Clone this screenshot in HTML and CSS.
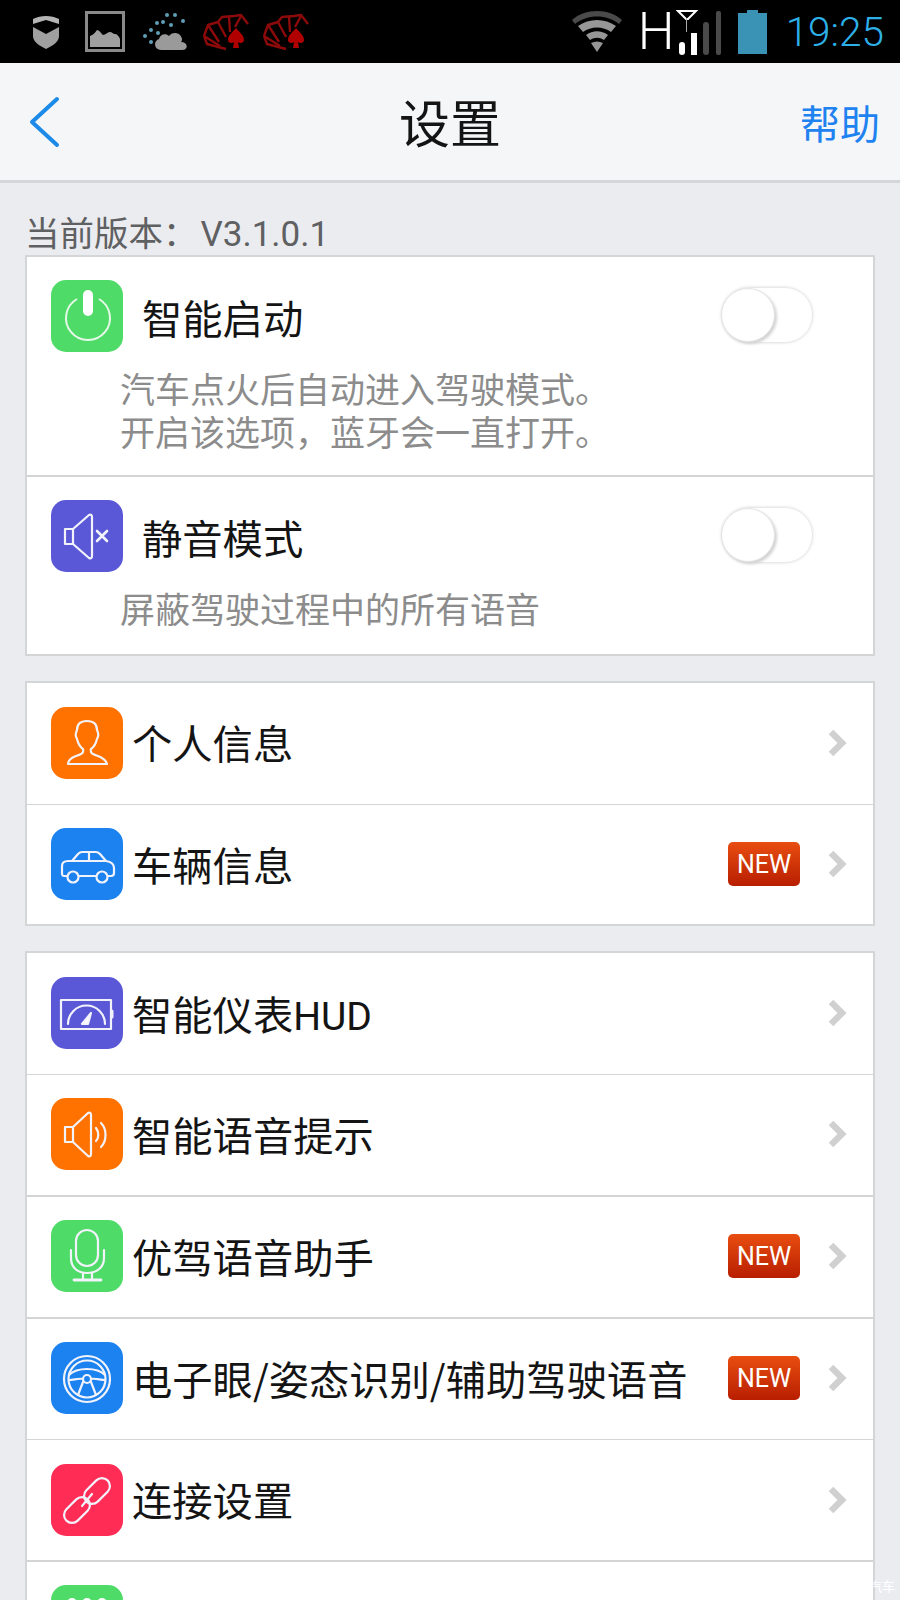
FILE: index.html
```html
<!DOCTYPE html>
<html lang="zh-CN">
<head>
  <meta charset="UTF-8" />
  <meta name="viewport" content="width=device-width, initial-scale=1" />
  <title>设置</title>
  <link rel="stylesheet" href="styles.css">
</head>
<body>
  <div class="statusbar">
    <div class="status-left">
      <svg class="st-shield" viewBox="0 0 28 34"><path d="M1 5C9 1 19 1 27 5v5L14 6 1 10z" fill="#b4b4b4" transform="translate(0 -1)"/><path d="M1 12l13 7 13-7v9c0 6-7 10-13 13C8 31 1 27 1 21z" fill="#a0a0a0"/></svg>
      <svg class="st-pic" viewBox="0 0 40 41"><rect x="1.5" y="1.5" width="37" height="38" fill="none" stroke="#8a8a8a" stroke-width="3"/><path d="M5 36V25c3-1 5-3 7-6 2 0 4 3 6 5 3 0 4-3 7-3 2 0 3 2 5 2 2 0 4 2 5 5v8z" fill="#a0a0a0"/></svg>
      <svg class="st-weather" viewBox="0 0 46 38"><path d="M18 37c-7 0-8-9-2-11 1-5 7-6 10-3 3-5 12-4 13 3 0 1 0 2-1 3 7 0 8 8 1 8z" fill="#9a9a9a"/><g fill="#5f9db5"><circle cx="2" cy="23" r="2"/><circle cx="8" cy="17" r="2"/><circle cx="8" cy="29" r="2"/><circle cx="14" cy="10" r="2"/><circle cx="15" cy="20" r="2"/><circle cx="20" cy="9" r="2"/><circle cx="28" cy="12" r="2"/><circle cx="32" cy="2" r="2"/><circle cx="24" cy="2" r="2"/><circle cx="40" cy="8" r="2"/></g></svg>
      <svg class="st-cards" viewBox="0 0 46 38"><g fill="none" stroke="#8c0a0a" stroke-width="2.4" stroke-linejoin="round"><path d="M1 23 5 12l10-3 4-5 12-1 7-1 7 9"/><path d="M1 23l3 8 19 5"/><path d="M1 23l16 10M5 12l11 17M15 9l8 15M26 4l1 15M38 3l-6 11"/></g><path d="M33 15c3 4 8 7 8 12 0 3-4 4-6 2l1 6h-6l1-6c-2 2-6 1-6-2 0-5 5-8 8-12z" fill="#b00000"/></svg>
      <svg class="st-cards" viewBox="0 0 46 38"><g fill="none" stroke="#8c0a0a" stroke-width="2.4" stroke-linejoin="round"><path d="M1 23 5 12l10-3 4-5 12-1 7-1 7 9"/><path d="M1 23l3 8 19 5"/><path d="M1 23l16 10M5 12l11 17M15 9l8 15M26 4l1 15M38 3l-6 11"/></g><path d="M33 15c3 4 8 7 8 12 0 3-4 4-6 2l1 6h-6l1-6c-2 2-6 1-6-2 0-5 5-8 8-12z" fill="#b00000"/></svg>
    </div>
    <div class="status-right">
      <svg class="st-wifi" viewBox="0 0 52 44"><path d="M1 10C14-2 38-2 51 10l-3 4C36 4 16 4 4 14z" fill="#4a4a4a"/><path d="M7 16c11-8 27-8 38 0l-5 6c-8-6-20-6-28 0z" fill="#969696"/><path d="M15 25c7-5 15-5 22 0l-4 5c-5-3-9-3-14 0z" fill="#969696"/><path d="M20 33c4-2 8-2 12 0l-6 9z" fill="#969696"/></svg>
      <span class="st-h">H</span>
      <svg class="st-signal" viewBox="0 0 46 46"><path d="M2 2h18l-8 8h-2z" fill="none" stroke="#fff" stroke-width="2"/><path d="M10 9h1v14h-1z" fill="#aaa"/><rect x="3" y="33" width="6" height="13" rx="3" fill="#fff"/><rect x="15" y="24" width="6" height="22" fill="#fff"/><rect x="27" y="13" width="6" height="33" rx="3" fill="#4a4a4a"/><rect x="40" y="2" width="5" height="44" rx="2" fill="#4a4a4a"/></svg>
      <svg class="st-batt" viewBox="0 0 29 44"><path d="M9 0h11v3h9v41H0V3h9z" fill="#3a92b5"/></svg>
      <span class="st-time">19:25</span>
    </div>
  </div>

  <div class="navbar">
    <svg class="nav-back" viewBox="0 0 32 52"><path d="M29 3 4 26l25 23" fill="none" stroke="#1b8ae8" stroke-width="4" stroke-linecap="round" stroke-linejoin="round"/></svg>
    <div class="nav-title">设置</div>
    <div class="nav-help">帮助</div>
  </div>

  <div class="version">当前版本：<span class="latin">V3.1.0.1</span></div>

  <div class="card">
    <div class="switch-row switch-row-a">
      <div class="switch-head">
        <div class="icon green">
          <svg viewBox="0 0 72 72"><path d="M26 19a22 22 0 1 0 22 0" fill="none" stroke="#e6f8e8" stroke-width="2"/><rect x="32" y="10" width="10" height="26" rx="5" fill="#fff"/></svg>
        </div>
        <div class="switch-title">智能启动</div>
        <div class="toggle"><span class="knob"></span></div>
      </div>
      <div class="switch-desc">汽车点火后自动进入驾驶模式。<br>开启该选项，蓝牙会一直打开。</div>
    </div>
    <div class="switch-row switch-row-b">
      <div class="switch-head">
        <div class="icon purple">
          <svg viewBox="0 0 72 72" class="line"><path d="M14 29v15h8L38 58c2 1 3 0 3-2V17c0-2-1-3-3-2L22 29z"/><path d="M22 29v15"/><path d="M46 31l10 10M56 31 46 41" stroke-width="2.6"/></svg>
        </div>
        <div class="switch-title">静音模式</div>
        <div class="toggle"><span class="knob"></span></div>
      </div>
      <div class="switch-desc">屏蔽驾驶过程中的所有语音</div>
    </div>
  </div>

  <div class="card">
    <div class="row thin">
      <div class="icon orange">
        <svg viewBox="0 0 72 72" class="line"><path d="M17 57c0-4 3-6 8-8 6-2 8-3 7-7-3-2-5-6-6-10-2-3-1-7 0-9 0-6 4-9 10-9s10 3 10 9c1 2 2 6 0 9-1 4-3 8-6 10-1 4 1 5 7 7 5 2 8 4 9 8z"/></svg>
      </div>
      <div class="row-title">个人信息</div>
      <svg class="chev" viewBox="0 0 20 30"><path d="M4 4l11 11L4 26" fill="none" stroke="#d0d0d0" stroke-width="6.5"/></svg>
    </div>
    <div class="row last">
      <div class="icon blue">
        <svg viewBox="0 0 72 72" class="line"><path d="M16 48h-3c-2 0-2-1-2-3v-7c0-3 2-5 6-5h4l6-7c1-1 2-2 4-2h14c2 0 3 1 4 2l6 7c6 1 8 3 8 7v5c0 2-1 3-3 3h-3"/><path d="M21 33h34M38 25v8M28 48h17"/><circle cx="22" cy="49" r="5.5"/><circle cx="51" cy="49" r="5.5"/></svg>
      </div>
      <div class="row-title">车辆信息</div>
      <span class="badge">NEW</span>
      <svg class="chev" viewBox="0 0 20 30"><path d="M4 4l11 11L4 26" fill="none" stroke="#d0d0d0" stroke-width="6.5"/></svg>
    </div>
  </div>

  <div class="card">
    <div class="row thin">
      <div class="icon purple">
        <svg viewBox="0 0 72 72" class="line"><path d="M10 23h50v29H10z"/><path d="M17 47a18.500 18.500 0 0 1 37 0"/><path d="M31 47l9-11-3 11z" fill="#fff"/><path d="M61 34v6" stroke-width="3"/></svg>
      </div>
      <div class="row-title">智能仪表<span class="latin hud">HUD</span></div>
      <svg class="chev" viewBox="0 0 20 30"><path d="M4 4l11 11L4 26" fill="none" stroke="#d0d0d0" stroke-width="6.5"/></svg>
    </div>
    <div class="row">
      <div class="icon orange">
        <svg viewBox="0 0 72 72" class="line"><path d="M14 29v15h8L37 58c2 1 3 0 3-2V17c0-2-1-3-3-2L22 29z"/><path d="M22 29v15"/><path d="M45 30c3 4 3 10 0 13"/><path d="M50 25c6 6 6 18 0 24"/></svg>
      </div>
      <div class="row-title">智能语音提示</div>
      <svg class="chev" viewBox="0 0 20 30"><path d="M4 4l11 11L4 26" fill="none" stroke="#d0d0d0" stroke-width="6.5"/></svg>
    </div>
    <div class="row">
      <div class="icon green">
        <svg viewBox="0 0 72 72" class="line"><rect x="25" y="10" width="22" height="36" rx="11"/><path d="M20 30v8c0 10 7 15 16 15s17-5 17-15v-8"/><path d="M32 53v7M41 53v7"/><path d="M23 60h27" stroke-width="2.8"/></svg>
      </div>
      <div class="row-title">优驾语音助手</div>
      <span class="badge">NEW</span>
      <svg class="chev" viewBox="0 0 20 30"><path d="M4 4l11 11L4 26" fill="none" stroke="#d0d0d0" stroke-width="6.5"/></svg>
    </div>
    <div class="row thin">
      <div class="icon blue">
        <svg viewBox="0 0 72 72" class="line"><circle cx="36" cy="37" r="23"/><circle cx="36" cy="37" r="18.500"/><circle cx="36" cy="37" r="4"/><path d="M18 33c5-5 11-6 18-6s13 1 18 6M18 38c5 0 9-2 14-1M54 38c-5 0-9-2-14-1M32 40l-5 13M40 40l5 13"/></svg>
      </div>
      <div class="row-title">电子眼/姿态识别/辅助驾驶语音</div>
      <span class="badge">NEW</span>
      <svg class="chev" viewBox="0 0 20 30"><path d="M4 4l11 11L4 26" fill="none" stroke="#d0d0d0" stroke-width="6.5"/></svg>
    </div>
    <div class="row">
      <div class="icon pink">
        <svg viewBox="0 0 72 72" class="line"><rect x="31" y="19" width="30" height="16" rx="8" transform="rotate(-45 46 27)"/><rect x="11" y="38" width="30" height="16" rx="8" transform="rotate(-45 26 46)"/><path d="M31 42l10-12"/></svg>
      </div>
      <div class="row-title">连接设置</div>
      <svg class="chev" viewBox="0 0 20 30"><path d="M4 4l11 11L4 26" fill="none" stroke="#d0d0d0" stroke-width="6.5"/></svg>
    </div>
    <div class="row">
      <div class="icon green">
        <svg viewBox="0 0 72 72"><g fill="#fff"><circle cx="21" cy="18" r="5"/><circle cx="36" cy="18" r="5"/><circle cx="51" cy="18" r="5"/></g></svg>
      </div>
    </div>
  </div>

  <div class="watermark">汽车</div>
</body>
</html>
```

FILE: styles.css
```css
html, body {
  margin: 0;
  padding: 0;
}
body {
  position: relative;
  width: 900px;
  height: 1600px;
  overflow: hidden;
  background-color: #ebecf0;
  font-family: "Noto Sans CJK SC", "Roboto", sans-serif;
  color: #141414;
}
.latin {
  font-family: "Roboto", sans-serif;
}

/* status bar */
.statusbar {
  height: 63px;
  background-color: #000;
  display: flex;
  justify-content: space-between;
  align-items: center;
  padding: 0 16px 0 32px;
  box-sizing: border-box;
}
.status-left, .status-right {
  display: flex;
  align-items: center;
}
.st-shield { width: 28px; height: 34px; margin-right: 25px; }
.st-pic { width: 40px; height: 41px; margin-right: 18px; }
.st-weather { width: 46px; height: 38px; margin-right: 14px; }
.st-cards { width: 46px; height: 38px; margin-right: 14px; }
.st-wifi { width: 52px; height: 44px; margin-right: 15px; }
.st-h {
  font-family: "Roboto", sans-serif;
  font-weight: 300;
  font-size: 52px;
  line-height: 63px;
  color: #fff;
  width: 38px;
}
.st-signal { width: 46px; height: 46px; margin-right: 16px; }
.st-batt { width: 29px; height: 44px; margin-right: 19px; }
.st-time {
  font-family: "Roboto", sans-serif;
  font-weight: 300;
  font-size: 40.5px;
  color: #2db0e8;
}

/* nav */
.navbar {
  height: 117px;
  background-color: #f5f6f8;
  border-bottom: 3px solid #d5d6d8;
  display: flex;
  align-items: center;
  justify-content: space-between;
  padding: 0 20px 0 28px;
  position: relative;
}
.nav-back {
  width: 32px;
  height: 52px;
}
.nav-title {
  position: absolute;
  left: 0;
  right: 0;
  text-align: center;
  font-size: 51px;
  line-height: 117px;
}
.nav-help {
  font-size: 40px;
  color: #1e82f0;
}

.version {
  font-size: 34.5px;
  line-height: 40px;
  color: #5f6062;
  padding: 28px 0 0 25px;
  height: 44px;
}
.version .latin {
  font-size: 35px;
  margin-left: 3px;
}

/* cards */
.card {
  margin: 0 25px 25px;
  background-color: #fff;
  border: 2px solid #d4d5d7;
}
.switch-row {
  padding: 23px 0 0 24px;
  box-sizing: border-box;
}
.switch-row-a {
  height: 220px;
  border-bottom: 2px solid #d4d5d7;
}
.switch-row-b {
  height: 177px;
}
.switch-head {
  display: flex;
  align-items: center;
  height: 72px;
}
.switch-title {
  font-size: 40.3px;
  margin-left: 19px;
  flex: 1;
}
.switch-desc {
  font-size: 35px;
  line-height: 43px;
  color: #8c8c8c;
  margin: 14px 0 0 69px;
}
.toggle {
  position: relative;
  width: 90px;
  height: 54px;
  border: 1px solid #e8e8e8;
  border-radius: 28px;
  margin: -2px 60px 0 0;
  box-shadow: 0 0 3px #ddd;
}
.knob {
  position: absolute;
  left: -1px;
  top: 0;
  width: 52px;
  height: 52px;
  border-radius: 50%;
  background-color: #fff;
  border: 1px solid #e4e4e4;
  box-shadow: 2px 2px 3px #d2d2d2;
}

.icon {
  width: 72px;
  height: 72px;
  border-radius: 15px;
  flex-shrink: 0;
  overflow: hidden;
}
.icon svg {
  display: block;
  width: 72px;
  height: 72px;
}
.line {
  fill: none;
  stroke: #f2f2fb;
  stroke-width: 2.2;
  stroke-linejoin: round;
  stroke-linecap: round;
}
.green { background-color: #4fdb68; }
.purple { background-color: #5a58d6; }
.orange { background-color: #ff7200; }
.blue { background-color: #1b82f0; }
.pink { background-color: #ff2d55; }

.row {
  height: 121.75px;
  box-sizing: border-box;
  padding: 0 26px 1px 24px;
  display: flex;
  align-items: center;
  border-bottom: 2px solid #d4d5d7;
}
.row.thin {
  border-bottom-width: 1px;
}
.row.last {
  height: 119.5px;
  border-bottom: none;
}
.row-title {
  font-size: 40.3px;
  margin-left: 9px;
  padding-bottom: 2px;
  flex: 1;
}
.hud {
  font-size: 39px;
}
.badge {
  width: 72px;
  height: 44px;
  line-height: 46px;
  text-align: center;
  border-radius: 5px;
  background: linear-gradient(#e84e10, #b81e00);
  color: #fff;
  font-family: "Roboto", sans-serif;
  font-size: 25px;
  margin-right: 27px;
}
.chev {
  width: 20px;
  height: 30px;
  flex-shrink: 0;
}

/* sits over the corner of the photo */
.watermark {
  position: absolute;
  right: 5px;
  bottom: 5px;
  font-size: 13px;
  color: #fff;
}
```
